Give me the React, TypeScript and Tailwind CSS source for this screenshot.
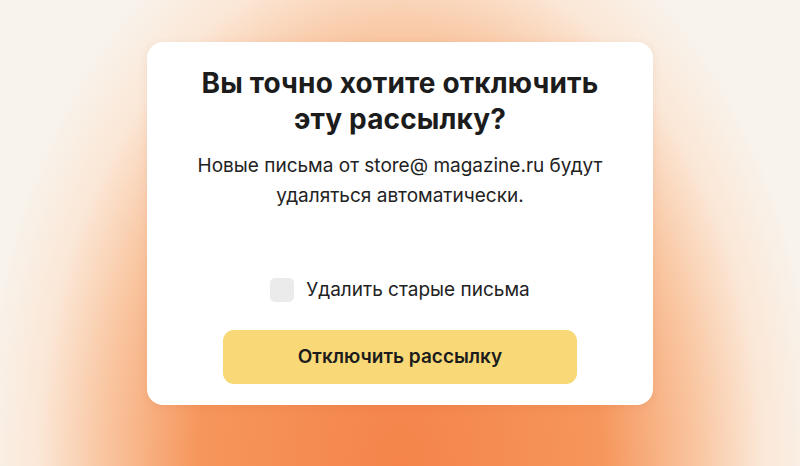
import { useState } from 'react'

export default function App() {
  const [removeOld, setRemoveOld] = useState(false)

  return (
    <div className="flex h-[466px] w-full items-start justify-center bg-[#f8f3ec] bg-[radial-gradient(ellipse_420px_600px_at_50%_100%,#f4844a_0%,#f6965c_48%,#f9c49e_70%,#fbe7d6_86%,#f8f3ec_100%)] pt-[42px] font-['Inter','Noto_Sans',sans-serif]">
      <div className="flex w-[506px] flex-col items-center rounded-2xl bg-white px-6 pt-[23px] pb-[21px] text-center shadow-[0_2px_10px_rgba(150,60,10,0.08)]">
        <h2 className="text-[28px] leading-[36px] font-bold tracking-[0.005em] text-[#1c1c1c]">
          Вы точно хотите отключить
          <br />
          эту рассылку?
        </h2>
        <p className="mt-[14px] text-[19px] leading-[30px] text-[#222]">
          Новые письма от store@ magazine.ru будут
          <br />
          удаляться автоматически.
        </p>

        <label className="mt-[67px] flex cursor-pointer items-center gap-3 select-none">
          <input
            type="checkbox"
            checked={removeOld}
            onChange={(e) => setRemoveOld(e.target.checked)}
            className="h-6 w-6 cursor-pointer appearance-none rounded-[5px] bg-[#ebebeb] checked:bg-[#fad977]"
          />
          <span className="text-[19px] leading-6 text-[#222]">Удалить старые письма</span>
        </label>

        <button
          type="button"
          className="mt-[28px] h-[54px] w-[354px] cursor-pointer rounded-[11px] bg-[#f9d977] text-[19px] font-semibold text-[#1c1c1c] transition-colors hover:bg-[#f7d160]"
        >
          Отключить рассылку
        </button>
      </div>
    </div>
  )
}
